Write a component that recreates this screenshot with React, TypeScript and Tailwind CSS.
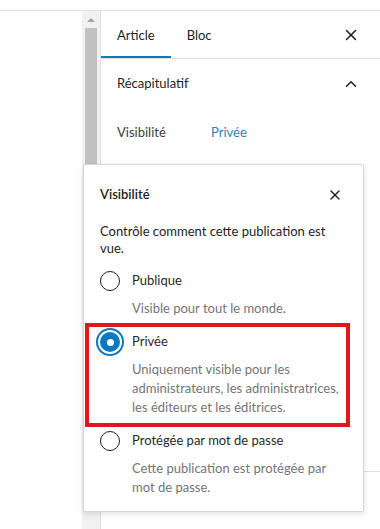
import { X, ChevronUp } from "lucide-react";

const font = { fontFamily: 'Lato, "Open Sans", sans-serif' };

const Radio = ({ checked }: { checked?: boolean }) =>
  checked ? (
    <span className="relative flex h-5 w-5 shrink-0 items-center justify-center rounded-full bg-[#0a7ac0] shadow-[0_0_0_2px_#fff,0_0_0_4px_#0a7ac0]">
      <span className="h-[7px] w-[7px] rounded-full bg-white" />
    </span>
  ) : (
    <span className="h-5 w-5 shrink-0 rounded-full border border-[#1e1e1e] bg-white" />
  );

const Option = ({
  label,
  lines,
  checked,
}: {
  label: string;
  lines: string[];
  checked?: boolean;
}) => (
  <div className="flex flex-col">
    <div className="flex h-5 items-center gap-3">
      <Radio checked={checked} />
      <span className="text-[13px] text-[#2a2a2a]">{label}</span>
    </div>
    <div className="mt-[8px] pl-8 text-[13px] leading-[19px] text-[#757575]">
      {lines.map((l) => (
        <div key={l} className="whitespace-nowrap">
          {l}
        </div>
      ))}
    </div>
  </div>
);

export default function App() {
  return (
    <div
      className="relative h-[529px] w-[380px] overflow-hidden bg-white"
      style={font}
    >
      <div className="mt-[10px] flex h-[519px] border-t border-[#e0e0e0]">
        <div className="w-[82px]" />
        <div className="flex w-[18px] flex-col items-center bg-[#f1f1f1]">
          <div className="mt-[7px] h-0 w-0 border-x-[4px] border-b-[4px] border-x-transparent border-b-[#a3a3a3]" />
          <div className="mt-[6px] h-[300px] w-[12px] bg-[#c1c1c1]" />
        </div>
        <aside className="flex flex-1 flex-col border-l border-[#e0e0e0] text-[13px] text-[#1e1e1e]">
          <div className="flex h-[48px] items-stretch border-b border-[#e0e0e0] pr-5">
            <div className="relative flex items-center px-4 pt-[2px]">
              Article
              <span className="absolute inset-x-0 bottom-0 h-[2px] bg-[#0a7ac0]" />
            </div>
            <div className="flex items-center px-4 pt-[2px]">Bloc</div>
            <div className="ml-auto flex items-center">
              <X className="h-[18px] w-[18px]" strokeWidth={2} />
            </div>
          </div>
          <div className="border-b border-[#e0e0e0] pb-[328px]">
            <div className="flex h-[50px] items-center pl-4 pr-5">
              <span>Récapitulatif</span>
              <ChevronUp className="ml-auto h-[18px] w-[18px]" strokeWidth={2} />
            </div>
            <div className="mt-[14px] flex items-center px-4">
              <span className="w-[94px] text-[#3d3d3d]">Visibilité</span>
              <span className="text-[#2f7fc1]">Privée</span>
            </div>
          </div>
        </aside>
      </div>

      <div className="absolute left-[83px] top-[164px] h-[348px] w-[281px] rounded-[2px] border border-[#d6d6d6] bg-white px-4 pt-[20px] shadow-[0_2px_6px_rgba(0,0,0,0.12)]">
        <div className="flex h-5 items-center justify-between text-[13px] font-semibold text-[#1e1e1e]">
          <span>Visibilité</span>
          <X className="mr-[4px] h-[16px] w-[16px]" strokeWidth={2} />
        </div>
        <p className="mt-[18px] pr-4 text-[13px] leading-[17px] text-[#1e1e1e]">
          Contrôle comment cette publication est vue.
        </p>
        <div className="mt-[14px] flex flex-col gap-[14px]">
          <Option label="Publique" lines={["Visible pour tout le monde."]} />
          <Option
            label="Privée"
            checked
            lines={[
              "Uniquement visible pour les",
              "administrateurs, les administratrices,",
              "les éditeurs et les éditrices.",
            ]}
          />
          <Option
            label="Protégée par mot de passe"
            lines={["Cette publication est protégée par", "mot de passe."]}
          />
        </div>
        <div className="absolute left-[1px] top-[158px] h-[104px] w-[265px] border-4 border-[#e3151f]" />
      </div>
    </div>
  );
}
